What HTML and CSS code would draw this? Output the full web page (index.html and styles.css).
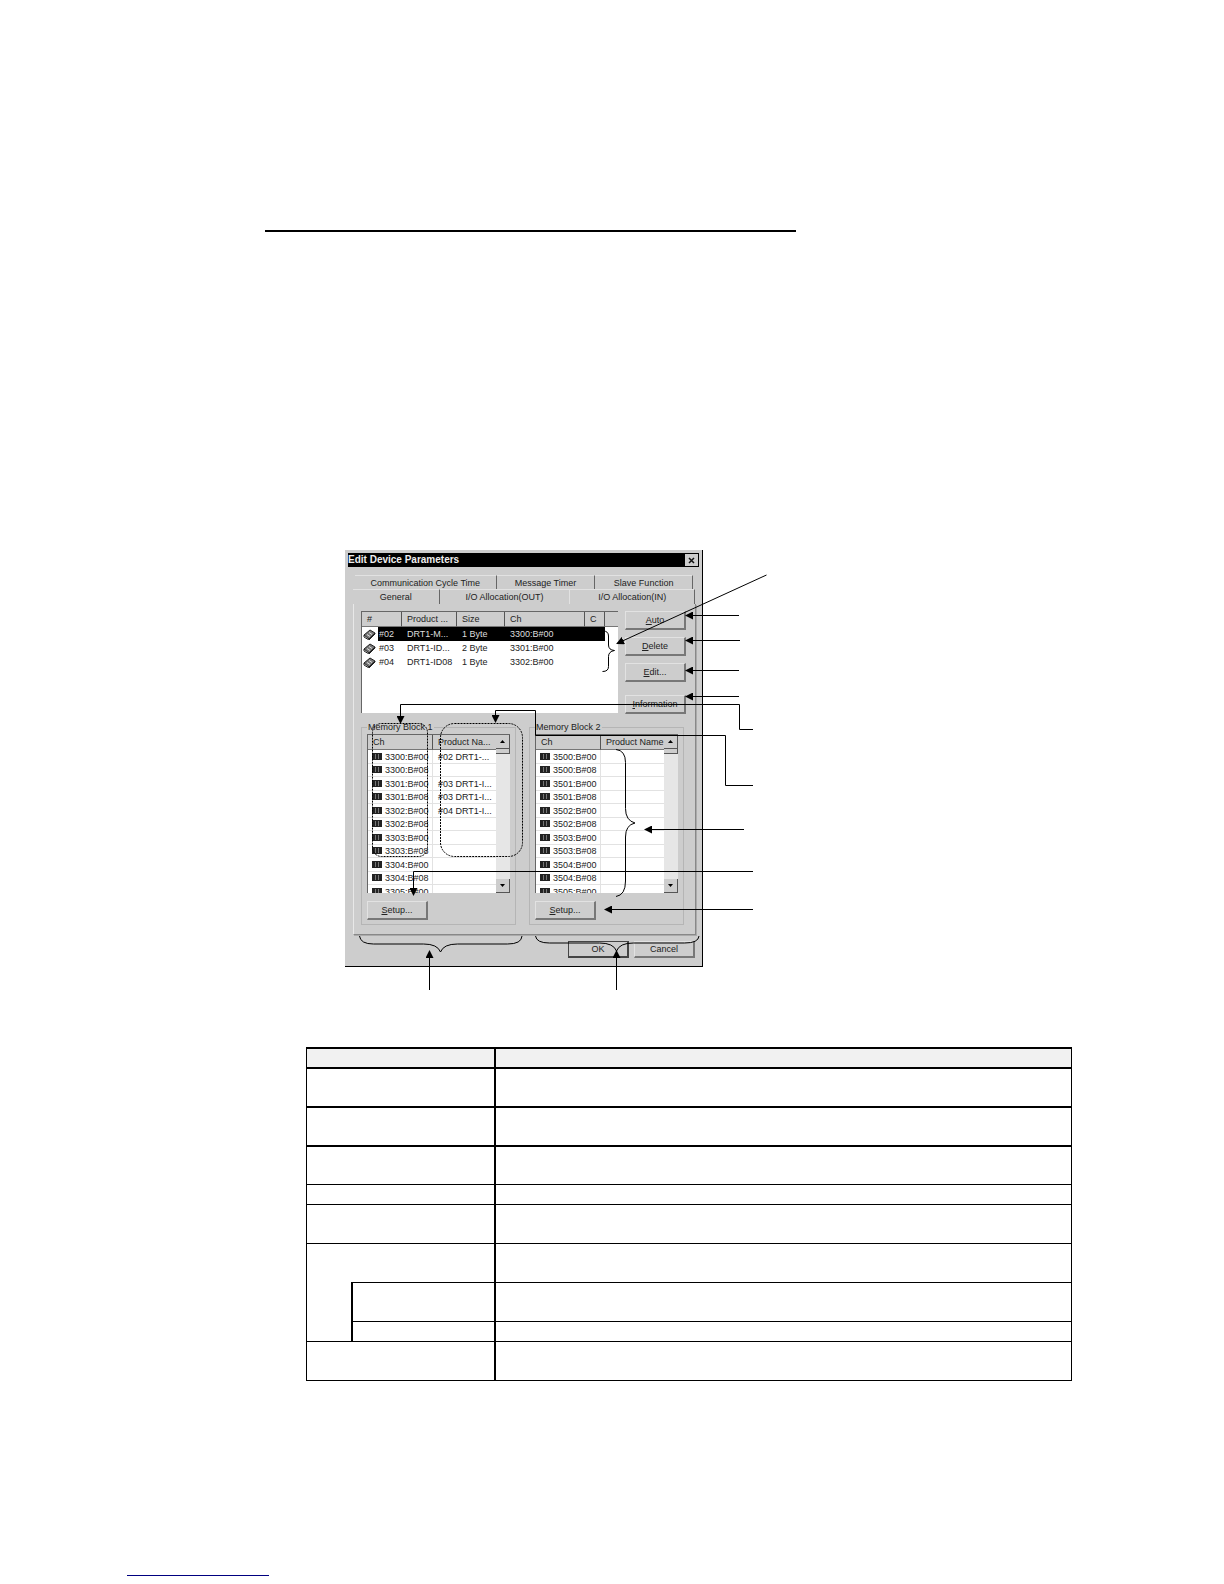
FILE: index.html
```html
<!DOCTYPE html>
<html lang="en">
<head>
    <meta charset="UTF-8">
    <meta name="viewport" content="width=device-width, initial-scale=1.0">
    <title>Edit Device Parameters</title>
    <link rel="stylesheet" href="styles.css">
</head>
<body>

    <!-- Shared icons -->
    <svg class="defs" width="0" height="0" aria-hidden="true">
        <symbol id="device" viewBox="0 0 13 11">
            <path d="M1 6 7 1l5 3-6 6z" fill="#777" stroke="#222"/>
            <path d="M1 6v2l5 3 6-6V4" fill="none" stroke="#222"/>
            <path d="M4 5.500l3 2M6 3.500l3 2" stroke="#ddd"/>
        </symbol>
        <symbol id="chip" viewBox="0 0 10 7">
            <path d="M0 0h10v7H0z" fill="#222"/>
            <path d="M3.500 1v5M6.500 1v5" stroke="#777"/>
        </symbol>
    </svg>

    <main class="page">
        <hr class="title-rule">

        <div class="figure">
            <section class="dialog" aria-label="Edit Device Parameters">
                <div class="titlebar">
                    <span>Edit Device Parameters</span>
                    <button class="close" type="button" aria-label="Close">
                        <svg width="7" height="7" viewBox="0 0 7 7"><path d="M1 1l5 5M6 1L1 6" stroke="#111" stroke-width="1.500"/></svg>
                    </button>
                </div>

                <div class="tabs tabs-back">
                    <button type="button">Communication Cycle Time</button>
                    <button type="button">Message Timer</button>
                    <button type="button">Slave Function</button>
                </div>
                <div class="tabs tabs-front">
                    <button type="button">General</button>
                    <button type="button">I/O Allocation(OUT)</button>
                    <button type="button" class="active">I/O Allocation(IN)</button>
                </div>

                <div class="panel">
                    <div class="devices">
                        <div class="list device-list">
                            <table>
                                <colgroup><col class="c-num"><col class="c-product"><col class="c-size"><col class="c-ch"><col class="c-c"><col></colgroup>
                                <thead>
                                    <tr><th>#</th><th>Product ...</th><th>Size</th><th>Ch</th><th>C</th><th></th></tr>
                                </thead>
                                <tbody>
                                    <tr class="selected"><td><svg class="device"><use href="#device"/></svg><span>#02</span></td><td>DRT1-M...</td><td>1 Byte</td><td>3300:B#00</td><td></td><td></td></tr>
                                    <tr><td><svg class="device"><use href="#device"/></svg><span>#03</span></td><td>DRT1-ID...</td><td>2 Byte</td><td>3301:B#00</td><td></td><td></td></tr>
                                    <tr><td><svg class="device"><use href="#device"/></svg><span>#04</span></td><td>DRT1-ID08</td><td>1 Byte</td><td>3302:B#00</td><td></td><td></td></tr>
                                </tbody>
                            </table>
                        </div>
                        <div class="actions">
                            <button class="btn" type="button"><u>A</u>uto</button>
                            <button class="btn" type="button"><u>D</u>elete</button>
                            <button class="btn" type="button"><u>E</u>dit...</button>
                            <button class="btn info" type="button"><u>I</u>nformation</button>
                        </div>
                    </div>

                    <div class="blocks">
                        <fieldset>
                            <legend>Memory Block 1</legend>
                            <div class="list memory-list">
                                <div class="rows">
                                    <table>
                                        <colgroup><col class="c-mem"><col></colgroup>
                                        <thead><tr><th>Ch</th><th>Product Na...</th></tr></thead>
                                        <tbody>
                                            <tr><td><svg class="chip"><use href="#chip"/></svg>3300:B#00</td><td>#02 DRT1-...</td></tr>
                                            <tr><td><svg class="chip"><use href="#chip"/></svg>3300:B#08</td><td></td></tr>
                                            <tr><td><svg class="chip"><use href="#chip"/></svg>3301:B#00</td><td>#03 DRT1-I...</td></tr>
                                            <tr><td><svg class="chip"><use href="#chip"/></svg>3301:B#08</td><td>#03 DRT1-I...</td></tr>
                                            <tr><td><svg class="chip"><use href="#chip"/></svg>3302:B#00</td><td>#04 DRT1-I...</td></tr>
                                            <tr><td><svg class="chip"><use href="#chip"/></svg>3302:B#08</td><td></td></tr>
                                            <tr><td><svg class="chip"><use href="#chip"/></svg>3303:B#00</td><td></td></tr>
                                            <tr><td><svg class="chip"><use href="#chip"/></svg>3303:B#08</td><td></td></tr>
                                            <tr><td><svg class="chip"><use href="#chip"/></svg>3304:B#00</td><td></td></tr>
                                            <tr><td><svg class="chip"><use href="#chip"/></svg>3304:B#08</td><td></td></tr>
                                            <tr><td><svg class="chip"><use href="#chip"/></svg>3305:B#00</td><td></td></tr>
                                        </tbody>
                                    </table>
                                </div>
                                <div class="scrollbar">
                                    <button type="button" aria-label="Scroll up"><svg width="5" height="3"><path d="M0 3h5L2.500 0z"/></svg></button>
                                    <span class="thumb"></span>
                                    <button type="button" aria-label="Scroll down"><svg width="5" height="3"><path d="M0 0h5L2.500 3z"/></svg></button>
                                </div>
                            </div>
                            <button class="btn" type="button"><u>S</u>etup...</button>
                        </fieldset>

                        <fieldset>
                            <legend>Memory Block 2</legend>
                            <div class="list memory-list">
                                <div class="rows">
                                    <table>
                                        <colgroup><col class="c-mem"><col></colgroup>
                                        <thead><tr><th>Ch</th><th>Product Name</th></tr></thead>
                                        <tbody>
                                            <tr><td><svg class="chip"><use href="#chip"/></svg>3500:B#00</td><td></td></tr>
                                            <tr><td><svg class="chip"><use href="#chip"/></svg>3500:B#08</td><td></td></tr>
                                            <tr><td><svg class="chip"><use href="#chip"/></svg>3501:B#00</td><td></td></tr>
                                            <tr><td><svg class="chip"><use href="#chip"/></svg>3501:B#08</td><td></td></tr>
                                            <tr><td><svg class="chip"><use href="#chip"/></svg>3502:B#00</td><td></td></tr>
                                            <tr><td><svg class="chip"><use href="#chip"/></svg>3502:B#08</td><td></td></tr>
                                            <tr><td><svg class="chip"><use href="#chip"/></svg>3503:B#00</td><td></td></tr>
                                            <tr><td><svg class="chip"><use href="#chip"/></svg>3503:B#08</td><td></td></tr>
                                            <tr><td><svg class="chip"><use href="#chip"/></svg>3504:B#00</td><td></td></tr>
                                            <tr><td><svg class="chip"><use href="#chip"/></svg>3504:B#08</td><td></td></tr>
                                            <tr><td><svg class="chip"><use href="#chip"/></svg>3505:B#00</td><td></td></tr>
                                        </tbody>
                                    </table>
                                </div>
                                <div class="scrollbar">
                                    <button type="button" aria-label="Scroll up"><svg width="5" height="3"><path d="M0 3h5L2.500 0z"/></svg></button>
                                    <span class="thumb"></span>
                                    <button type="button" aria-label="Scroll down"><svg width="5" height="3"><path d="M0 0h5L2.500 3z"/></svg></button>
                                </div>
                            </div>
                            <button class="btn" type="button"><u>S</u>etup...</button>
                        </fieldset>
                    </div>
                </div>

                <div class="dialog-buttons">
                    <button class="btn default" type="button">OK</button>
                    <button class="btn" type="button">Cancel</button>
                </div>
            </section>

            <!-- Callout arrows and braces over the dialog -->
            <svg class="callouts" width="430" height="450" viewBox="345 550 430 450" aria-hidden="true">
                <defs>
                    <marker id="arrow" markerUnits="userSpaceOnUse" markerWidth="8" markerHeight="8" refX="7" refY="4" orient="auto">
                        <path d="M0 0l8 4-8 4z"/>
                    </marker>
                </defs>
                <g class="arrows">
                    <path d="M766.500 575L617 643.500"/>
                    <path d="M739 615.500H686"/>
                    <path d="M740 640.500H686"/>
                    <path d="M739 670.500H686"/>
                    <path d="M739 696.500H686"/>
                    <path d="M753 729.500H739.500V704.500H400.500V723"/>
                    <path d="M753 785.500H725.500V735.500H535.500V710.500H495.500V722"/>
                    <path d="M744 829.500H645"/>
                    <path d="M753 871.500H413.500V895"/>
                    <path d="M753 909.500H605"/>
                    <path d="M429.500 990V951"/>
                    <path d="M616.500 990V951"/>
                </g>
                <g class="braces">
                    <path d="M603 631q5.500 0 5.500 5v9q0 5 6 5.500q-6 1-6 6v10q0 5-6 5"/>
                    <path d="M616 749.500q9.500 1 9.500 13v46q0 12 9.500 14.500q-9.500 2-9.500 14v44q0 14-9.500 15.500"/>
                    <path d="M359.500 936q1 8 14 8h50q14 0 17 8q3-8 17-8h50q14 0 14.500-8"/>
                    <path d="M535.500 936q1 7 14 7h50q14 0 17 8q3-8 17-8h51q14 0 14.500-7"/>
                </g>
                <g class="dashes">
                    <rect x="372.500" y="723.500" width="55" height="133" rx="9"/>
                    <rect x="440.500" y="723.500" width="82" height="133" rx="14"/>
                </g>
            </svg>
        </div>

        <!-- Item descriptions -->
        <table class="spec">
            <colgroup><col class="c-indent"><col class="c-item"><col></colgroup>
            <thead>
                <tr class="thick short"><th colspan="2"></th><th></th></tr>
            </thead>
            <tbody>
                <tr class="thick"><td colspan="2"></td><td></td></tr>
                <tr class="thick"><td colspan="2"></td><td></td></tr>
                <tr class="thick"><td colspan="2"></td><td></td></tr>
                <tr class="short"><td colspan="2"></td><td></td></tr>
                <tr><td colspan="2"></td><td></td></tr>
                <tr><td colspan="2"></td><td></td></tr>
                <tr><td class="indent" rowspan="2"></td><td class="sub"></td><td></td></tr>
                <tr class="short"><td class="sub"></td><td></td></tr>
                <tr><td colspan="2"></td><td></td></tr>
            </tbody>
        </table>
    </main>

    <footer>
        <a class="footer-link" href="#" aria-label="Home"></a>
    </footer>

</body>
</html>
```
FILE: styles.css
```css
* {
    box-sizing: border-box;
}

body {
    margin: 0;
    background-color: #fff;
    font-family: "Liberation Sans", Arial, sans-serif;
    font-size: 9px;
    line-height: 10px;
    color: #222;
}

.defs {
    display: block;
}

.page {
    padding: 230px 152px 0 265px;
}

.title-rule {
    width: 66%;
    max-width: 531px;
    height: 2px;
    margin: 0 0 318px;
    border: none;
    background-color: #000;
}

/* Dialog */
.figure {
    position: relative;
    width: 358px;
    margin-left: 80px;
}

.dialog {
    padding: 3px 3px 8px;
    background-color: #cdcdcd;
    border-right: 1px solid #000;
    border-bottom: 1px solid #000;
}

button {
    font: inherit;
    color: inherit;
    padding: 0;
    border: none;
    background-color: #cdcdcd;
    white-space: nowrap;
}

.titlebar {
    display: flex;
    justify-content: space-between;
    align-items: center;
    height: 14px;
    padding-right: 1px;
    background-color: #000;
    color: #eee;
    font-size: 10px;
    font-weight: bold;
}

.close {
    display: flex;
    align-items: center;
    justify-content: center;
    width: 13px;
    height: 12px;
}

/* Tabs */
.tabs {
    display: grid;
}

.tabs button {
    border-top: 1px solid #e2e2e2;
    border-right: 1px solid #666;
}

.tabs-back {
    grid-template-columns: 142fr 99fr 98fr;
    height: 14px;
    margin: 8px 6px 0 7px;
}

.tabs-front {
    grid-template-columns: 87fr 131fr 125fr;
    height: 15px;
    margin: 0 4px 0 5px;
}

.tabs-front button:nth-child(2) {
    border-right-color: #e2e2e2;
}

.panel {
    margin: 0 3px 0 5px;
    padding: 7px 9px 9px 7px;
    border: 1px solid #888;
    border-top: none;
    border-left-color: #e8e8e8;
    box-shadow: 1px 1px #aaa;
}

/* Lists */
.list {
    background-color: #fff;
    border-top: 1px solid #666;
    border-left: 1px solid #666;
    overflow: hidden;
}

.list table {
    width: 100%;
    table-layout: fixed;
    border-spacing: 0;
}

.list th {
    height: 15px;
    padding: 0 0 0 5px;
    background-color: #cdcdcd;
    border-right: 1px solid #555;
    border-bottom: 1px solid #777;
    font-weight: normal;
    text-align: left;
    white-space: nowrap;
}

.list td {
    height: 14px;
    padding: 0 0 0 5px;
    white-space: nowrap;
}

.list th:last-child {
    border-right: none;
}

.devices {
    display: flex;
    gap: 7px;
}

.device-list {
    flex: 1;
    height: 102px;
}

.c-num { width: 40px; }
.c-product { width: 55px; }
.c-size { width: 48px; }
.c-ch { width: 80px; }
.c-c { width: 20px; }
.c-mem { width: 65px; }

.device-list td:first-child {
    display: flex;
    align-items: center;
    gap: 2px;
    padding-left: 1px;
}

.device-list td span {
    flex: 1;
    padding-left: 1px;
    line-height: 14px;
}

.device {
    width: 13px;
    height: 11px;
}

.selected span,
.selected td:nth-child(n+2):nth-child(-n+5) {
    background-color: #000;
    color: #ddd;
}

.btn {
    width: 61px;
    height: 19px;
    border: 1px solid #e2e2e2;
    border-right: 2px solid #777;
    border-bottom: 2px solid #777;
}

.actions {
    display: flex;
    flex-direction: column;
    gap: 7px;
}

.actions .info {
    margin-top: 6px;
}

/* Memory blocks */
.blocks {
    display: grid;
    grid-template-columns: 1fr 1fr;
    gap: 13px;
    margin: 8px 2px 0 0;
}

fieldset {
    min-width: 0;
    margin: 0;
    padding: 2px 5px 4px;
    border: 1px solid #b5b5b5;
}

legend {
    padding: 0 1px;
}

.memory-list {
    display: flex;
    height: 159px;
    margin-bottom: 8px;
}

.rows {
    flex: 1;
    min-width: 0;
    overflow: hidden;
}

.memory-list td {
    border-bottom: 1px solid #e2e2e2;
}

.memory-list td:first-child {
    padding-left: 4px;
    border-right: 1px solid #e2e2e2;
}

.memory-list tr:nth-child(even) td {
    height: 13px;
}

.chip {
    width: 10px;
    height: 7px;
    margin-right: 3px;
}

.scrollbar {
    display: flex;
    flex-direction: column;
    width: 14px;
    background-color: #e6e6e6;
}

.scrollbar button {
    display: flex;
    align-items: center;
    justify-content: center;
    height: 14px;
    border-right: 1px solid #555;
    border-bottom: 1px solid #555;
}

.scrollbar button:last-child {
    margin-top: auto;
}

.thumb {
    height: 5px;
    background-color: #cdcdcd;
    border-right: 1px solid #555;
    border-bottom: 1px solid #555;
}

.dialog-buttons {
    display: flex;
    justify-content: flex-end;
    gap: 5px;
    margin: 6px 4px 0 0;
}

.dialog-buttons .btn {
    height: 17px;
}

.dialog-buttons .default {
    border: 1px solid #444;
    border-right-width: 2px;
    border-bottom-width: 2px;
}

/* Callouts */
.callouts {
    position: absolute;
    top: 0;
    left: 0;
    fill: none;
    stroke: #000;
}

.arrows path {
    marker-end: url(#arrow);
}

marker path {
    fill: #000;
    stroke: none;
}

.dashes {
    stroke-dasharray: 2 1;
}

/* Description table */
.spec {
    width: calc(100% - 41px);
    margin: 80px 0 0 41px;
    table-layout: fixed;
    border-spacing: 0;
    border-right: 1px solid #000;
    border-bottom: 1px solid #000;
}

.c-indent { width: 45px; }
.c-item { width: 143px; }

.spec th,
.spec td {
    height: 39px;
    padding: 0;
    border-top: 1px solid #000;
    border-left: 1px solid #000;
}

.spec th {
    background-color: #f1f1f1;
}

.spec .short th,
.spec .short td {
    height: 20px;
}

.spec .thick th,
.spec .thick td {
    border-top-width: 2px;
}

.spec th:last-child,
.spec td:last-child,
.spec .sub {
    border-left-width: 2px;
}

.spec .indent {
    border-top: none;
}

/* Footer */
footer {
    padding: 194px 127px 8px;
}

.footer-link {
    display: block;
    width: 142px;
    border-bottom: 1px solid #000080;
}
```
